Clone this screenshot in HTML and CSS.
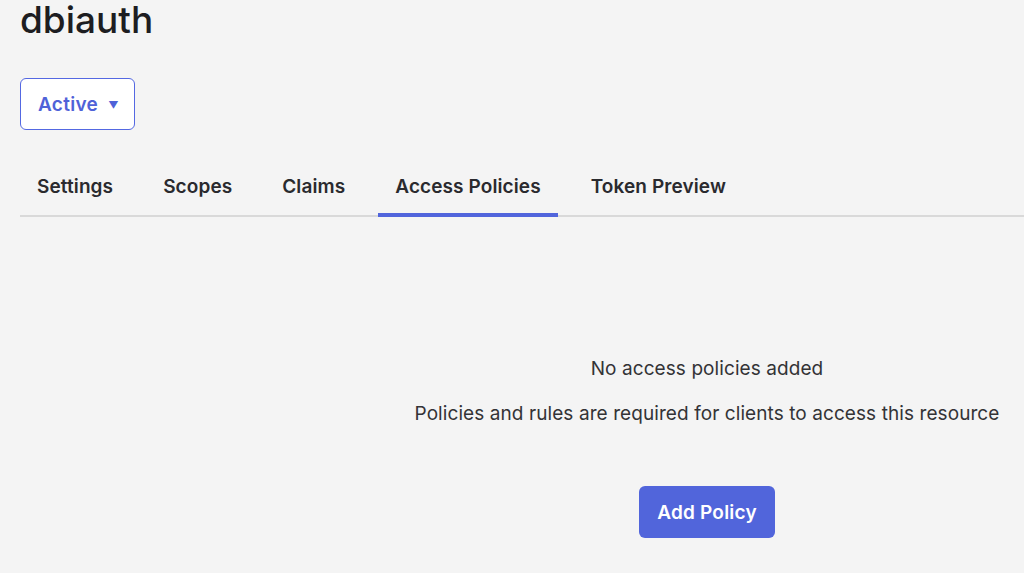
FILE: index.html
```html
<!DOCTYPE html>
<html>
	<head>
		<meta http-equiv="content-type" content="text/html; charset=utf-8" />

		<link rel="stylesheet" href="styles.css">
	</head>

	<body>
		<div class="page">
			<h1 class="page-title">dbiauth</h1>

			<button class="status-button" type="button">
				Active <span class="caret">&#9660;</span>
			</button>

			<nav class="tabs">
				<a class="tab">Settings</a>
				<a class="tab">Scopes</a>
				<a class="tab">Claims</a>
				<a class="tab tab-active">Access Policies</a>
				<a class="tab">Token Preview</a>
			</nav>

			<div class="empty-state">
				<p class="empty-title">No access policies added</p>
				<p class="empty-text">Policies and rules are required for clients to access this resource</p>
				<button class="primary-button" type="button">Add Policy</button>
			</div>
		</div>
	</body>
</html>
```

FILE: styles.css
```css
html, body {
	margin: 0;
	padding: 0;
	background: #f4f4f4;
}

body {
	font-family: Inter, "Noto Sans", sans-serif;
	color: #1d1d21;
	overflow: hidden;
}

.page {
	padding: 1px 0 0 20px;
}

.page-title {
	margin: 0;
	font-size: 37px;
	font-weight: 500;
	line-height: 37px;
	color: #1d1d21;
}

.status-button {
	display: flex;
	align-items: center;
	gap: 10px;
	box-sizing: border-box;
	width: 115px;
	height: 52px;
	margin-top: 40px;
	padding: 0 0 0 17px;
	border: 1px solid #5468e2;
	border-radius: 6px;
	background: #ffffff;
	color: #4f62d8;
	font-family: inherit;
	font-size: 19px;
	font-weight: 600;
	letter-spacing: 0.3px;
}

.caret {
	font-size: 10px;
	margin-top: 1px;
}

.tabs {
	display: flex;
	gap: 16px;
	margin-top: 34px;
	border-bottom: 2px solid #d9d9d9;
}

.tab {
	position: relative;
	padding: 11px 17px 16px;
	font-size: 19px;
	font-weight: 600;
	line-height: 24px;
	letter-spacing: 0.1px;
	color: #2a2a2e;
}

/* underline sits over the grey rule */
.tab-active::after {
	content: "";
	position: absolute;
	left: 0;
	right: 0;
	bottom: -2px;
	height: 4px;
	background: #5165dc;
}

.empty-state {
	display: flex;
	flex-direction: column;
	align-items: center;
	width: 634px;
	margin-left: 370px;
	padding-top: 140px;
}

.empty-title,
.empty-text {
	margin: 0;
	font-size: 19px;
	line-height: 24px;
	letter-spacing: 0.08px;
	color: #333336;
}

.empty-text {
	margin-top: 21px;
	white-space: nowrap;
}

.primary-button {
	box-sizing: border-box;
	height: 52px;
	margin-top: 60px;
	padding: 0 18px;
	border: none;
	border-radius: 6px;
	background: #5165db;
	color: #ffffff;
	font-family: inherit;
	font-size: 19px;
	font-weight: 600;
	letter-spacing: 0.2px;
}
```
